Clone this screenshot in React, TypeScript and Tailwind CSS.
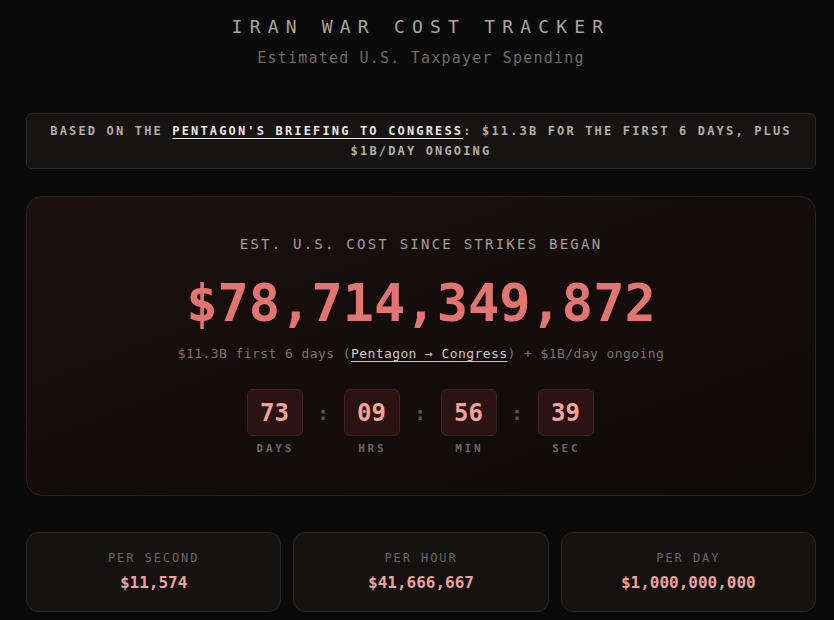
import React from "react";

const mono = { fontFamily: '"DejaVu Sans Mono", "Liberation Mono", monospace' };

function Unit({ value, label }: { value: string; label: string }) {
  return (
    <div className="flex flex-col items-center">
      <div className="w-[56px] h-[47px] flex items-center justify-center rounded-md border border-[#4a1f1d] bg-[#2a1312] text-[24px] leading-[32px] font-bold text-[#f0a39d]">
        {value}
      </div>
      <div className="mt-[5px] text-[11px] leading-[16px] tracking-[0.25em] text-[#6e6663] font-bold pl-[0.15em]">
        {label}
      </div>
    </div>
  );
}

function Colon() {
  return (
    <div className="w-[41px] h-[47px] flex items-center justify-center text-[20px] text-[#5a5350] font-bold">
      :
    </div>
  );
}

function Stat({ label, value }: { label: string; value: string }) {
  return (
    <div className="flex-1 rounded-xl border border-[#2a2725] bg-[#141312] pt-[17px] pb-[16px] flex flex-col items-center">
      <div className="text-[12px] leading-[16px] tracking-[0.16em] text-[#6b6562]">{label}</div>
      <div className="mt-[5px] text-[16px] leading-[24px] font-bold text-[#eda29b]">{value}</div>
    </div>
  );
}

export default function App() {
  return (
    <div className="min-h-[620px] w-full bg-[#0b0a0a] overflow-hidden" style={mono}>
      <div className="ml-[26px] w-[790px] flex flex-col">
        <div className="pt-[13px] text-center text-[18px] leading-[28px] tracking-[0.4em] text-[#aaa49f]">
          IRAN WAR COST TRACKER
        </div>
        <div className="mt-[7px] text-center text-[15px] leading-[20px] tracking-[0.08em] text-[#6f6a66]">
          Estimated U.S. Taxpayer Spending
        </div>

        <div className="mt-[45px] rounded-md border border-[#2b2826] bg-[#151413] py-[7px] px-[16px] text-center text-[12px] leading-[20px] font-bold tracking-[0.18em] text-[#b3ada7]">
          <span>BASED ON THE </span>
          <span className="text-[#ebe6e1] underline underline-offset-[3px]">PENTAGON'S BRIEFING TO CONGRESS</span>
          <span>: $11.3B FOR THE FIRST 6 DAYS, PLUS $1B/DAY ONGOING</span>
        </div>

        <div className="mt-[27px] rounded-2xl border border-[#3a1c1a] bg-gradient-to-br from-[#1b100f] via-[#140d0c] to-[#0f0b0a] pt-[37px] pb-[38px] flex flex-col items-center">
          <div className="text-[14px] leading-[20px] tracking-[0.16em] text-[#a59e99]">
            EST. U.S. COST SINCE STRIKES BEGAN
          </div>
          <div className="mt-[23px] text-[52px] leading-[52px] font-bold text-[#e27571]">
            $78,714,349,872
          </div>
          <div className="mt-[15px] text-[13px] leading-[20px] tracking-[0.032em] text-[#7a726e]">
            <span>$11.3B first 6 days (</span>
            <span className="text-[#cfc7c1] underline underline-offset-[3px]">Pentagon → Congress</span>
            <span>) + $1B/day ongoing</span>
          </div>
          <div className="mt-[25px] flex items-start -translate-x-px">
            <Unit value="73" label="DAYS" />
            <Colon />
            <Unit value="09" label="HRS" />
            <Colon />
            <Unit value="56" label="MIN" />
            <Colon />
            <Unit value="39" label="SEC" />
          </div>
        </div>

        <div className="mt-[36px] flex gap-[12px]">
          <Stat label="PER SECOND" value="$11,574" />
          <Stat label="PER HOUR" value="$41,666,667" />
          <Stat label="PER DAY" value="$1,000,000,000" />
        </div>
      </div>
    </div>
  );
}
